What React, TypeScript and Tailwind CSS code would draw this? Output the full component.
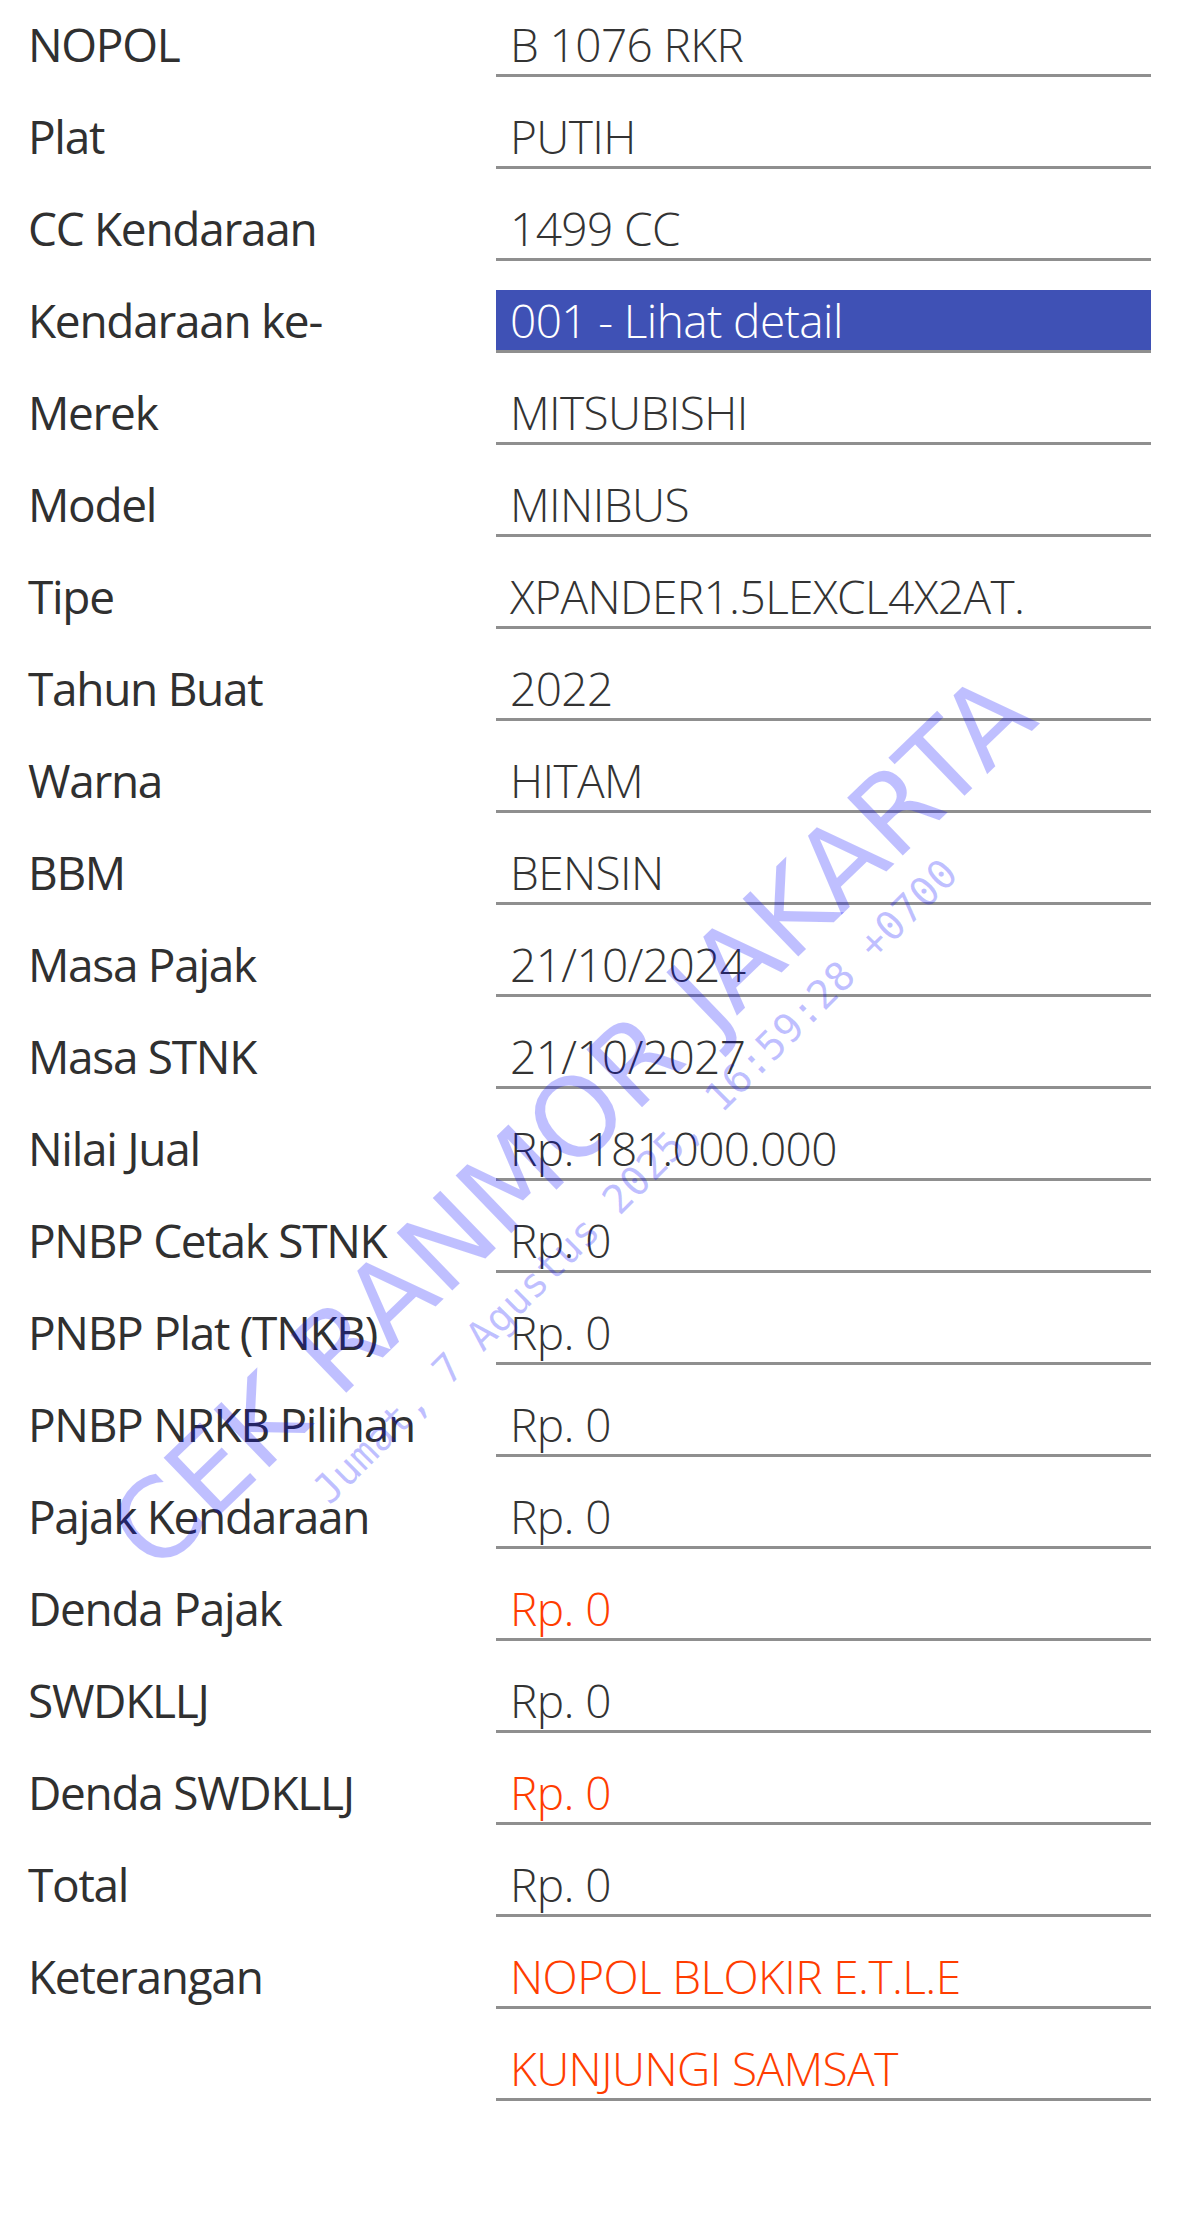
import React from "react";

type Row = { label: string; value: string; tone?: "red" | "blue" };

const rows: Row[] = [
  { label: "NOPOL", value: "B 1076 RKR" },
  { label: "Plat", value: "PUTIH" },
  { label: "CC Kendaraan", value: "1499 CC" },
  { label: "Kendaraan ke-", value: "001 - Lihat detail", tone: "blue" },
  { label: "Merek", value: "MITSUBISHI" },
  { label: "Model", value: "MINIBUS" },
  { label: "Tipe", value: "XPANDER1.5LEXCL4X2AT." },
  { label: "Tahun Buat", value: "2022" },
  { label: "Warna", value: "HITAM" },
  { label: "BBM", value: "BENSIN" },
  { label: "Masa Pajak", value: "21/10/2024" },
  { label: "Masa STNK", value: "21/10/2027" },
  { label: "Nilai Jual", value: "Rp. 181.000.000" },
  { label: "PNBP Cetak STNK", value: "Rp. 0" },
  { label: "PNBP Plat (TNKB)", value: "Rp. 0" },
  { label: "PNBP NRKB Pilihan", value: "Rp. 0" },
  { label: "Pajak Kendaraan", value: "Rp. 0" },
  { label: "Denda Pajak", value: "Rp. 0", tone: "red" },
  { label: "SWDKLLJ", value: "Rp. 0" },
  { label: "Denda SWDKLLJ", value: "Rp. 0", tone: "red" },
  { label: "Total", value: "Rp. 0" },
  { label: "Keterangan", value: "NOPOL BLOKIR E.T.L.E", tone: "red" },
  { label: "", value: "KUNJUNGI SAMSAT", tone: "red" },
];

export default function App() {
  return (
    <div className="relative w-[1200px] min-h-[2231px] overflow-hidden bg-white font-['Open_Sans','Noto_Sans',sans-serif]">
      <div className="flex flex-col gap-[29px] pt-[14px]">
        {rows.map((r, i) => (
          <div key={i} className="flex h-[63px]">
            <div className="w-[496px] pl-[28px] text-[46px] leading-[60px] font-medium tracking-[-1.3px] text-[#303030] whitespace-nowrap">
              {r.label}
            </div>
            <div
              className={
                r.tone === "blue"
                  ? "w-[655px] h-[63px] border-b-[3px] border-[#8f8f8f] bg-[#3f51b5] pl-[14px] text-[46px] leading-[60px] font-light tracking-[-0.6px] text-white whitespace-nowrap"
                  : r.tone === "red"
                  ? "w-[655px] h-[63px] border-b-[3px] border-[#8f8f8f] pl-[14px] text-[46px] leading-[60px] font-light tracking-[-0.6px] text-[#ff3d00] whitespace-nowrap"
                  : "w-[655px] h-[63px] border-b-[3px] border-[#8f8f8f] pl-[14px] text-[46px] leading-[60px] font-light tracking-[-0.6px] text-[#333333] whitespace-nowrap"
              }
            >
              {r.value}
            </div>
          </div>
        ))}
      </div>

      <div className="pointer-events-none absolute left-[572px] top-[1122px] -translate-x-1/2 -translate-y-1/2 -rotate-[44deg] whitespace-nowrap font-['DejaVu_Sans',sans-serif] text-[110px] leading-none text-[rgba(0,0,255,0.25)]">
        CEK RANMOR JAKARTA
      </div>
      <div className="pointer-events-none absolute left-[635px] top-[1181px] -translate-x-1/2 -translate-y-1/2 -rotate-[45deg] whitespace-nowrap font-['DejaVu_Sans_Mono',monospace] text-[40px] leading-none text-[rgba(0,0,255,0.25)]">
        Jumat, 7 Agustus 2025, 16:59:28 +0700
      </div>
    </div>
  );
}
